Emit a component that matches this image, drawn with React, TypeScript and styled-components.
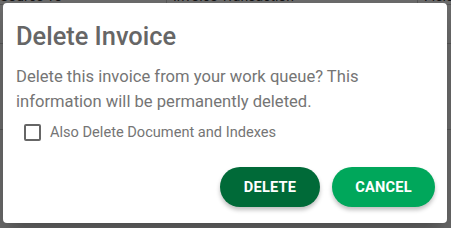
import styled, { createGlobalStyle } from 'styled-components';

const GlobalStyle = createGlobalStyle`
  html, body {
    margin: 0;
    padding: 0;
    width: 451px;
    height: 228px;
    overflow: hidden;
    background: #ffffff;
    font-family: Roboto, 'Liberation Sans', sans-serif;
  }
`;

const StyledPage = styled.div`
  position: relative;
  width: 451px;
  height: 228px;
  overflow: hidden;
`;

// the list page that sits behind the dialog
const StyledTable = styled.div`
  display: flex;
  flex-direction: column;
  margin-top: -12px;
`;

const StyledRow = styled.div<{ $height: number }>`
  display: grid;
  grid-template-columns: 166px 251px 1fr;
  height: ${(p) => p.$height}px;
  border-bottom: 1px solid #d0d0d0;
  color: #333;
  font-size: 14px;
`;

const StyledCell = styled.div`
  display: flex;
  align-items: center;
  padding-left: 6px;
  border-left: 1px solid #d0d0d0;
  white-space: nowrap;

  &:first-child {
    border-left: none;
    padding-left: 0;
  }
`;

const StyledOverlay = styled.div`
  position: absolute;
  inset: 0;
  background: rgba(0, 0, 0, 0.58);
  padding: 3px 4px 5px 3px;
  box-sizing: border-box;
  display: flex;
`;

const StyledDialog = styled.div`
  flex: 1;
  background: #ffffff;
  border-radius: 4px;
  box-shadow: 0 11px 15px -7px rgba(0, 0, 0, 0.2),
    0 24px 38px 3px rgba(0, 0, 0, 0.14);
  padding: 18px 12px 16px 13px;
  display: flex;
  flex-direction: column;
`;

const StyledTitle = styled.h2`
  margin: 0;
  font-size: 25.4px;
  font-weight: 500;
  line-height: 30px;
  color: #666666;
`;

const StyledMessage = styled.p`
  margin: 13px 24px 0 0;
  font-size: 16.6px;
  line-height: 25px;
  color: #757575;
`;

const StyledCheckRow = styled.label`
  display: flex;
  align-items: center;
  gap: 9px;
  margin: 9px 0 0 8px;
  font-size: 14.6px;
  color: #757575;
`;

const StyledCheckbox = styled.span`
  width: 17px;
  height: 17px;
  box-sizing: border-box;
  border: 2px solid #666666;
  border-radius: 2px;
`;

const StyledActions = styled.div`
  margin-top: auto;
  display: flex;
  justify-content: flex-end;
  gap: 12px;
`;

const StyledButton = styled.button<{ $tone: 'dark' | 'light' }>`
  height: 40px;
  min-width: ${(p) => (p.$tone === 'dark' ? 100 : 103)}px;
  border: none;
  border-radius: 20px;
  background: ${(p) => (p.$tone === 'dark' ? '#006a38' : '#00a75b')};
  color: #ffffff;
  font-family: Roboto, 'Liberation Sans', sans-serif;
  font-size: 14.6px;
  font-weight: 700;
  letter-spacing: 0.2px;
  text-transform: uppercase;
  box-shadow: 0 3px 4px rgba(0, 0, 0, 0.25);
  cursor: pointer;
`;

function App(): JSX.Element {
  return (
    <StyledPage>
      <GlobalStyle />
      <StyledTable>
        <StyledRow $height={16}>
          <StyledCell>Source To</StyledCell>
          <StyledCell>Invoice Transaction</StyledCell>
          <StyledCell>Field</StyledCell>
        </StyledRow>
        <StyledRow $height={38}>
          <StyledCell />
          <StyledCell />
          <StyledCell />
        </StyledRow>
        <StyledRow $height={85}>
          <StyledCell />
          <StyledCell />
          <StyledCell />
        </StyledRow>
      </StyledTable>
      <StyledOverlay>
        <StyledDialog>
          <StyledTitle>Delete Invoice</StyledTitle>
          <StyledMessage>
            Delete this invoice from your work queue? This information will be
            permanently deleted.
          </StyledMessage>
          <StyledCheckRow>
            <StyledCheckbox />
            Also Delete Document and Indexes
          </StyledCheckRow>
          <StyledActions>
            <StyledButton $tone="dark">Delete</StyledButton>
            <StyledButton $tone="light">Cancel</StyledButton>
          </StyledActions>
        </StyledDialog>
      </StyledOverlay>
    </StyledPage>
  );
}

export default App;
